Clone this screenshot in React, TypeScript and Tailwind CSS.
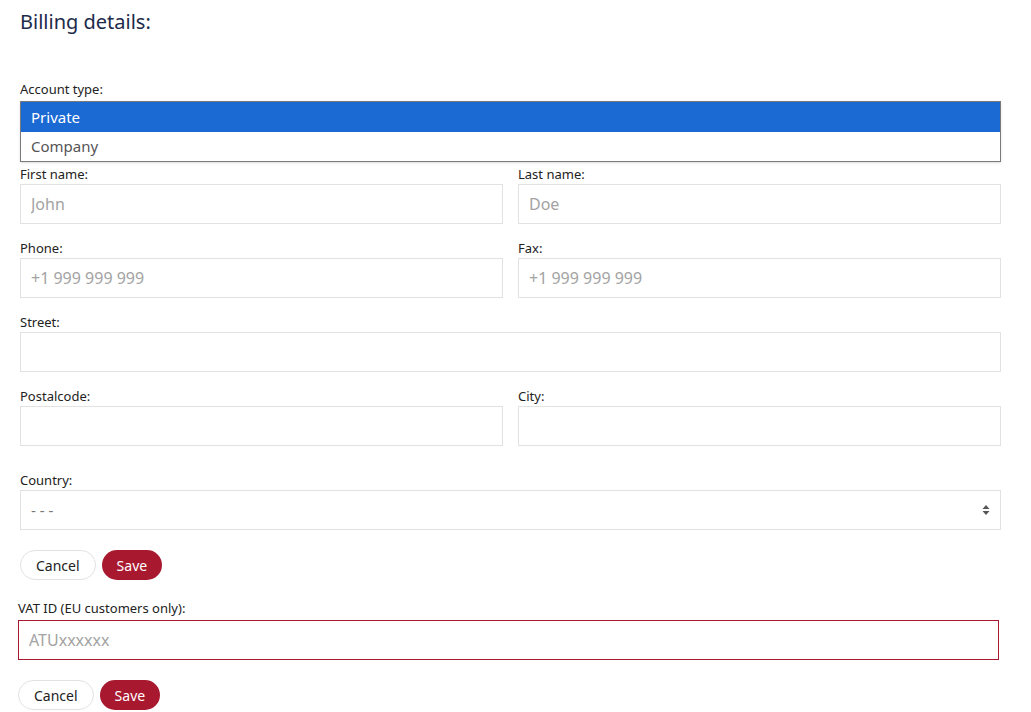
export default function App() {
  const font = { fontFamily: '"Noto Sans", "Open Sans", sans-serif' }
  const label = "block text-[13px] leading-[16px] text-[#222] mb-[2px]"
  const input =
    "w-full h-[40px] border border-[#e2e2e2] px-[10px] text-[16px] text-[#222] placeholder:text-[#a3a3a3] outline-none"

  const Field = ({ name, ph = "" }: { name: string; ph?: string }) => (
    <div className="flex-1">
      <label className={label}>{name}</label>
      <input className={input} placeholder={ph} />
    </div>
  )

  const Buttons = () => (
    <div className="flex gap-[6px]">
      <button className="h-[30px] px-[15px] rounded-full border border-[#e2e2e2] bg-white text-[14px] text-[#222]">
        Cancel
      </button>
      <button className="h-[30px] px-[15px] rounded-full bg-[#a8182f] text-[14px] text-white">Save</button>
    </div>
  )

  return (
    <div className="min-h-screen bg-white pt-[9px]" style={font}>
      <div className="px-[20px] w-[1021px]">
        <h2 className="text-[20px] leading-[26px] text-[#1c2a4a] mb-[46px]">Billing details:</h2>

        <label className="block text-[13px] leading-[16px] text-[#222] mb-[4px]">Account type:</label>
        <div className="relative h-[40px] border border-[#e2e2e2] mb-[25px]">
          <div className="absolute left-[-1px] right-[-1px] top-[-1px] border border-[#7a7a7a] bg-white shadow-sm z-10 text-[15px]">
            <div className="h-[30px] flex items-center px-[10px] bg-[#1b69d3] text-white">Private</div>
            <div className="h-[29px] flex items-center px-[10px] text-[#555]">Company</div>
          </div>
        </div>

        <div className="flex flex-col gap-[16px]">
          <div className="flex gap-[15px]">
            <Field name="First name:" ph="John" />
            <Field name="Last name:" ph="Doe" />
          </div>
          <div className="flex gap-[15px]">
            <Field name="Phone:" ph="+1 999 999 999" />
            <Field name="Fax:" ph="+1 999 999 999" />
          </div>
          <Field name="Street:" />
          <div className="flex gap-[15px]">
            <Field name="Postalcode:" />
            <Field name="City:" />
          </div>
        </div>

        <div className="mt-[26px]">
          <label className={label}>Country:</label>
          <div className="h-[40px] border border-[#e2e2e2] flex items-center justify-between px-[10px]">
            <span className="text-[15px] text-[#777]">- - -</span>
            <svg width="8" height="12" viewBox="0 0 8 12" fill="#555">
              <path d="M4 1L7.5 5H0.5Z" />
              <path d="M4 11L7.5 7H0.5Z" />
            </svg>
          </div>
        </div>

        <div className="mt-[20px]">
          <Buttons />
        </div>
      </div>

      <div className="px-[18px] w-[1017px] mt-[20px]">
        <label className="block text-[13px] leading-[16px] text-[#222] mb-[4px]">VAT ID (EU customers only):</label>
        <input
          className="w-full h-[40px] border border-[#a8182f] px-[10px] text-[16px] placeholder:text-[#a3a3a3] outline-none"
          placeholder="ATUxxxxxx"
        />
        <div className="mt-[20px]">
          <Buttons />
        </div>
      </div>
    </div>
  )
}
